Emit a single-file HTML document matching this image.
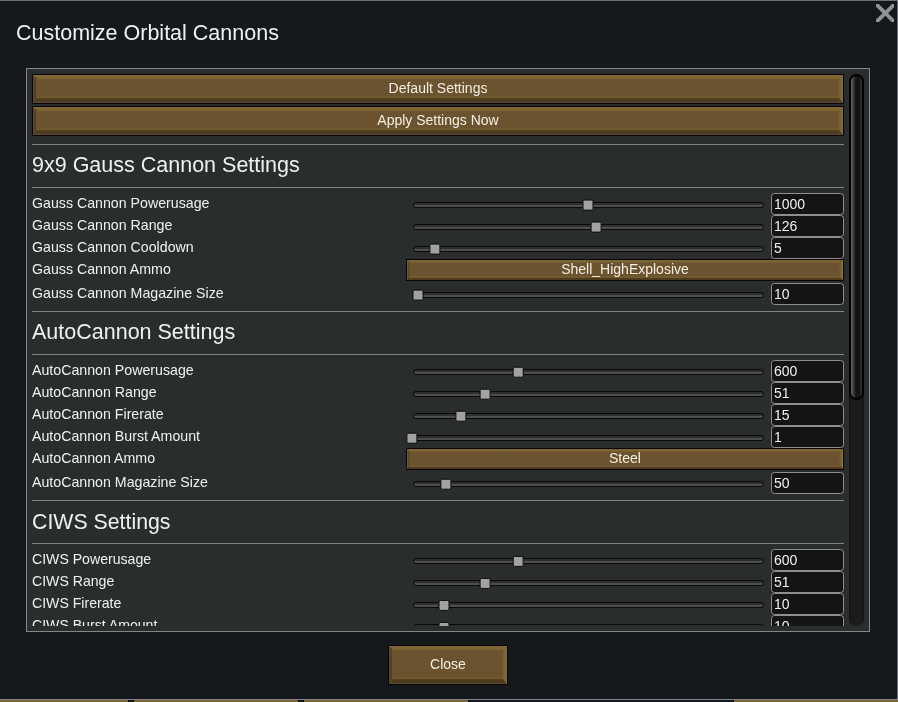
<!DOCTYPE html>
<html><head><meta charset="utf-8"><title>Customize Orbital Cannons</title>
<style>
html,body{margin:0;padding:0;}
body{width:898px;height:702px;overflow:hidden;background:#15191c;font-family:"Liberation Sans", sans-serif;position:relative;}
.t{position:absolute;white-space:nowrap;line-height:normal;will-change:transform;}
.abs{position:absolute;}
.btn{position:absolute;box-sizing:border-box;background:#6b532f;border:1px solid #0a0502;}
.btn::before,.btn::after{content:"";position:absolute;left:0;top:0;right:0;bottom:0;}
.btn::before{background:linear-gradient(to right,#574832 0,#574832 1px,#544220 1px,#544220 3px,#644e2b 3.5px,#71582f 4.5px,rgba(107,83,47,0) 5.5px) left/6px 100% no-repeat,linear-gradient(to left,#7d6c4c 0,#7d6c4c 1px,#7e6434 1px,#7e6434 3px,#735a31 4px,rgba(107,83,47,0) 5px) right/6px 100% no-repeat;}
.btn::after{background:linear-gradient(to bottom,#7d6848 0,#7d6848 1px,#7f6631 1px,#7f6631 3px,#6f5830 4px,rgba(107,83,47,0) 5px) top/100% 6px no-repeat,linear-gradient(to top,#5f4a38 0,#5f4a38 1px,#4a3a1e 1px,#4d3c1f 3px,#594423 5px,#70592f 5px,#70592f 7px,rgba(107,83,47,0) 7.5px) bottom/100% 8px no-repeat;clip-path:polygon(0 0,5px 5px,5px calc(100% - 6px),0 100%,100% 100%,calc(100% - 5px) calc(100% - 6px),calc(100% - 5px) 5px,100% 0);}
.btn.sm::before{background:linear-gradient(to right,#6b573a 0,#6b573a 1px,#5c4927 1px,#5e4a28 2.3px,#6f5831 3px,rgba(107,83,47,0) 4px) left/5px 100% no-repeat,linear-gradient(to left,#857650 0,#857650 1px,#7a6030 1px,#7a6030 3px,rgba(107,83,47,0) 4px) right/5px 100% no-repeat;}
.btn.sm::after{background:linear-gradient(to bottom,#7c6433 0,#7c6433 2px,rgba(107,83,47,0) 3.2px) top/100% 4px no-repeat,linear-gradient(to top,#4e3b1e 0,#4e3b1e 2.2px,#705a30 2.4px,#705a30 3.5px,rgba(107,83,47,0) 4px) bottom/100% 5px no-repeat;clip-path:polygon(0 0,3px 3px,3px calc(100% - 3px),0 100%,100% 100%,calc(100% - 3px) calc(100% - 3px),calc(100% - 3px) 3px,100% 0);}
.gl{position:absolute;height:1px;background:#828485;}
.trk{position:absolute;width:351px;height:6px;box-sizing:border-box;border-radius:3px;border:1px solid #0a0a0a;background:linear-gradient(#2f2f2f 0,#2f2f2f 50%,#4e4e4e 50%,#4e4e4e 100%);}
.hnd{position:absolute;left:0;top:0;width:10.8px;height:10.8px;box-sizing:border-box;border:1px solid #0c0c0c;border-radius:2px;background:#a2a2a2;}
.tb{position:absolute;width:73px;height:22px;box-sizing:border-box;border:1px solid #8f8f8f;border-radius:3.5px;background:#141414;}
#panel{position:absolute;left:26px;top:68px;width:844px;height:564px;box-sizing:border-box;border:1px solid #828687;background:#2a2d2e;}
#clip{position:absolute;left:0;top:0;width:898px;height:702px;clip-path:inset(74px 34px 76px 32px);}
#strk{position:absolute;left:849px;top:74px;width:15px;height:552px;border-radius:7px;background:linear-gradient(90deg,#0e0e0e 0,#1a1a1a 2px,#1d1d1d 12px,#141414 15px);}
#sthumb{position:absolute;left:849px;top:74px;width:15px;height:326px;box-sizing:border-box;border-radius:7.5px;border:solid #000;border-width:2px;background:linear-gradient(90deg,#5e5e5e 0,#565656 1.2px,#3a3a3a 2.6px,#202020 4px,#141414 5.5px,#141414 8.5px,#2a2a2a 9.5px,#303030 11px);}
</style></head><body>
<div class="abs" style="left:0;top:0;width:898px;height:1px;background:#6b7079"></div>
<div class="abs" style="left:897px;top:0;width:1px;height:700px;background:#6b7079"></div>
<div class="abs" style="left:0;top:699px;width:898px;height:1px;background:#7d828a"></div>
<div class="abs" style="left:0;top:700px;width:898px;height:2px;background:#151a20"></div>
<div class="abs" style="left:0;top:700px;width:128px;height:2px;background:linear-gradient(#79623c 0,#79623c 1px,#7c6432 1px,#7c6432 2px);border-right:1px solid #050403"></div>
<div class="abs" style="left:133px;top:700px;width:164px;height:2px;background:linear-gradient(#79623c 0,#79623c 1px,#7c6432 1px,#7c6432 2px);border-left:1px solid #050403;border-right:1px solid #050403"></div>
<div class="abs" style="left:303px;top:700px;width:164px;height:2px;background:linear-gradient(#79623c 0,#79623c 1px,#7c6432 1px,#7c6432 2px);border-left:1px solid #050403;border-right:1px solid #050403"></div>
<div class="abs" style="left:733px;top:700px;width:165px;height:2px;background:linear-gradient(#79623c 0,#79623c 1px,#7c6432 1px,#7c6432 2px);border-left:1px solid #050403"></div>
<div class="t" style="left:16.00px;top:21.19px;font-size:21.5px;color:#f0f0f0;">Customize Orbital Cannons</div>
<svg class="abs" style="left:875.7px;top:3.9px" width="18.7" height="18.3" viewBox="1 1 18 18" preserveAspectRatio="none"><path d="M1 1 L3.65 1 L10 7.35 L16.35 1 L19 1 L19 3.65 L12.65 10 L19 16.35 L19 19 L16.35 19 L10 12.65 L3.65 19 L1 19 L1 16.35 L7.35 10 L1 3.65 Z" fill="#8f9395"/></svg>
<div id="panel"></div>
<div id="clip">
<div class="btn" style="left:32px;top:74px;width:812px;height:30px"></div><div class="t" style="left:238.00px;width:400px;text-align:center;top:80.10px;font-size:14.0px;color:#f3eee2">Default Settings</div>
<div class="btn" style="left:32px;top:106px;width:812px;height:30px"></div><div class="t" style="left:238.00px;width:400px;text-align:center;top:112.10px;font-size:14.0px;color:#f3eee2">Apply Settings Now</div>
<div class="gl" style="left:32px;top:144px;width:812px"></div>
<div class="t" style="left:32.00px;top:153.39px;font-size:21.5px;color:#f0f0f0;">9x9 Gauss Cannon Settings</div>
<div class="gl" style="left:32px;top:187px;width:812px"></div>
<div class="t" style="left:32.00px;top:194.71px;font-size:14.2px;color:#f0f0f0;">Gauss Cannon Powerusage</div>
<div class="trk" style="left:413px;top:202px"></div><div class="hnd" style="transform:translate(582.50px,199.60px)"></div>
<div class="tb" style="left:771px;top:193px"></div><div class="t" style="left:773.90px;top:196.10px;font-size:14.0px;color:#f0f0f0;">1000</div>
<div class="t" style="left:32.00px;top:216.71px;font-size:14.2px;color:#f0f0f0;">Gauss Cannon Range</div>
<div class="trk" style="left:413px;top:224px"></div><div class="hnd" style="transform:translate(590.60px,221.60px)"></div>
<div class="tb" style="left:771px;top:215px"></div><div class="t" style="left:773.90px;top:218.10px;font-size:14.0px;color:#f0f0f0;">126</div>
<div class="t" style="left:32.00px;top:238.71px;font-size:14.2px;color:#f0f0f0;">Gauss Cannon Cooldown</div>
<div class="trk" style="left:413px;top:246px"></div><div class="hnd" style="transform:translate(429.40px,243.60px)"></div>
<div class="tb" style="left:771px;top:237px"></div><div class="t" style="left:773.90px;top:240.10px;font-size:14.0px;color:#f0f0f0;">5</div>
<div class="t" style="left:32.00px;top:260.71px;font-size:14.2px;color:#f0f0f0;">Gauss Cannon Ammo</div>
<div class="btn sm" style="left:406px;top:259px;width:438px;height:22px"></div><div class="t" style="left:425.00px;width:400px;text-align:center;top:260.90px;font-size:14.0px;color:#f3eee2">Shell_HighExplosive</div>
<div class="t" style="left:32.00px;top:284.71px;font-size:14.2px;color:#f0f0f0;">Gauss Cannon Magazine Size</div>
<div class="trk" style="left:413px;top:292px"></div><div class="hnd" style="transform:translate(412.50px,289.60px)"></div>
<div class="tb" style="left:771px;top:283px"></div><div class="t" style="left:773.90px;top:286.10px;font-size:14.0px;color:#f0f0f0;">10</div>
<div class="gl" style="left:32px;top:311px;width:812px"></div>
<div class="t" style="left:32.00px;top:320.39px;font-size:21.5px;color:#f0f0f0;">AutoCannon Settings</div>
<div class="gl" style="left:32px;top:354px;width:812px"></div>
<div class="t" style="left:32.00px;top:361.81px;font-size:14.2px;color:#f0f0f0;">AutoCannon Powerusage</div>
<div class="trk" style="left:413px;top:369px"></div><div class="hnd" style="transform:translate(512.70px,366.70px)"></div>
<div class="tb" style="left:771px;top:360px"></div><div class="t" style="left:773.90px;top:363.20px;font-size:14.0px;color:#f0f0f0;">600</div>
<div class="t" style="left:32.00px;top:383.81px;font-size:14.2px;color:#f0f0f0;">AutoCannon Range</div>
<div class="trk" style="left:413px;top:391px"></div><div class="hnd" style="transform:translate(479.60px,388.70px)"></div>
<div class="tb" style="left:771px;top:382px"></div><div class="t" style="left:773.90px;top:385.20px;font-size:14.0px;color:#f0f0f0;">51</div>
<div class="t" style="left:32.00px;top:405.81px;font-size:14.2px;color:#f0f0f0;">AutoCannon Firerate</div>
<div class="trk" style="left:413px;top:413px"></div><div class="hnd" style="transform:translate(455.40px,410.70px)"></div>
<div class="tb" style="left:771px;top:404px"></div><div class="t" style="left:773.90px;top:407.20px;font-size:14.0px;color:#f0f0f0;">15</div>
<div class="t" style="left:32.00px;top:427.81px;font-size:14.2px;color:#f0f0f0;">AutoCannon Burst Amount</div>
<div class="trk" style="left:413px;top:435px"></div><div class="hnd" style="transform:translate(406.40px,432.70px)"></div>
<div class="tb" style="left:771px;top:426px"></div><div class="t" style="left:773.90px;top:429.20px;font-size:14.0px;color:#f0f0f0;">1</div>
<div class="t" style="left:32.00px;top:449.81px;font-size:14.2px;color:#f0f0f0;">AutoCannon Ammo</div>
<div class="btn sm" style="left:406px;top:448px;width:438px;height:22px"></div><div class="t" style="left:425.00px;width:400px;text-align:center;top:450.00px;font-size:14.0px;color:#f3eee2">Steel</div>
<div class="t" style="left:32.00px;top:473.81px;font-size:14.2px;color:#f0f0f0;">AutoCannon Magazine Size</div>
<div class="trk" style="left:413px;top:481px"></div><div class="hnd" style="transform:translate(440.40px,478.70px)"></div>
<div class="tb" style="left:771px;top:472px"></div><div class="t" style="left:773.90px;top:475.20px;font-size:14.0px;color:#f0f0f0;">50</div>
<div class="gl" style="left:32px;top:500px;width:812px"></div>
<div class="t" style="left:32.00px;top:509.57px;font-size:21.3px;color:#f0f0f0;">CIWS Settings</div>
<div class="gl" style="left:32px;top:543px;width:812px"></div>
<div class="t" style="left:32.00px;top:551.11px;font-size:14.1px;color:#f0f0f0;">CIWS Powerusage</div>
<div class="trk" style="left:413px;top:558px"></div><div class="hnd" style="transform:translate(512.70px,555.90px)"></div>
<div class="tb" style="left:771px;top:549px"></div><div class="t" style="left:773.90px;top:552.40px;font-size:14.0px;color:#f0f0f0;">600</div>
<div class="t" style="left:32.00px;top:573.11px;font-size:14.1px;color:#f0f0f0;">CIWS Range</div>
<div class="trk" style="left:413px;top:580px"></div><div class="hnd" style="transform:translate(479.60px,577.90px)"></div>
<div class="tb" style="left:771px;top:571px"></div><div class="t" style="left:773.90px;top:574.40px;font-size:14.0px;color:#f0f0f0;">51</div>
<div class="t" style="left:32.00px;top:595.11px;font-size:14.1px;color:#f0f0f0;">CIWS Firerate</div>
<div class="trk" style="left:413px;top:602px"></div><div class="hnd" style="transform:translate(438.50px,599.90px)"></div>
<div class="tb" style="left:771px;top:593px"></div><div class="t" style="left:773.90px;top:596.40px;font-size:14.0px;color:#f0f0f0;">10</div>
<div class="t" style="left:32.00px;top:617.11px;font-size:14.1px;color:#f0f0f0;">CIWS Burst Amount</div>
<div class="trk" style="left:413px;top:624px"></div><div class="hnd" style="transform:translate(438.50px,621.90px)"></div>
<div class="tb" style="left:771px;top:615px"></div><div class="t" style="left:773.90px;top:618.40px;font-size:14.0px;color:#f0f0f0;">10</div>
</div>
<div id="strk"></div>
<div id="sthumb"></div>
<div class="btn" style="left:388px;top:645px;width:120px;height:40px"></div><div class="t" style="left:248.00px;width:400px;text-align:center;top:656.10px;font-size:14.0px;color:#f3eee2">Close</div>
</body></html>
